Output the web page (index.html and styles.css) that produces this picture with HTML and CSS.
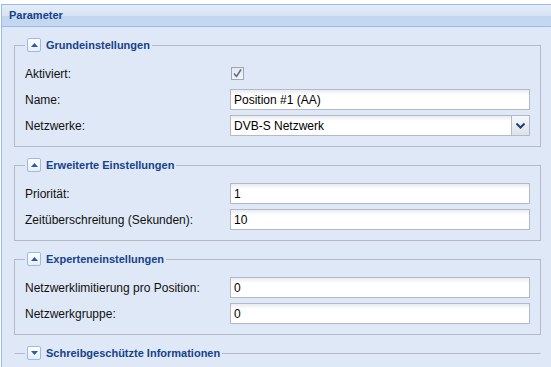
FILE: index.html
```html
<!DOCTYPE html>
<html>
<head>
<title>Parameter</title>
<link rel="stylesheet" href="styles.css">
</head>
<body>
    <div class="panel">
        <div class="panel-header">Parameter</div>
        <div class="panel-body">

            <fieldset class="group">
                <legend><span class="toggle"><svg width="7" height="4" viewBox="0 0 7 4"><path d="M0 4 L3.5 0 L7 4 Z" fill="#2b5aa6"/></svg></span>Grundeinstellungen</legend>
                <div class="row">
                    <label>Aktiviert:</label>
                    <span class="checkbox">
                        <svg width="13" height="13" viewBox="0 0 13 13"><path d="M3 6.5 L5.5 9.5 L10 2.5" fill="none" stroke="#5a6f9a" stroke-width="1.6"/></svg>
                    </span>
                </div>
                <div class="row">
                    <label>Name:</label>
                    <input type="text" class="field" value="Position #1 (AA)">
                </div>
                <div class="row">
                    <label>Netzwerke:</label>
                    <div class="combo">
                        <input type="text" class="field" value="DVB-S Netzwerk">
                        <span class="trigger"><svg width="9" height="6" viewBox="0 0 9 6"><path d="M0.5 0.5 L4.5 4.5 L8.5 0.5" fill="none" stroke="#1f3f78" stroke-width="2"/></svg></span>
                    </div>
                </div>
            </fieldset>

            <fieldset class="group">
                <legend><span class="toggle"><svg width="7" height="4" viewBox="0 0 7 4"><path d="M0 4 L3.5 0 L7 4 Z" fill="#2b5aa6"/></svg></span>Erweiterte Einstellungen</legend>
                <div class="row">
                    <label>Priorität:</label>
                    <input type="text" class="field" value="1">
                </div>
                <div class="row">
                    <label>Zeitüberschreitung (Sekunden):</label>
                    <input type="text" class="field" value="10">
                </div>
            </fieldset>

            <fieldset class="group">
                <legend><span class="toggle"><svg width="7" height="4" viewBox="0 0 7 4"><path d="M0 4 L3.5 0 L7 4 Z" fill="#2b5aa6"/></svg></span>Experteneinstellungen</legend>
                <div class="row">
                    <label>Netzwerklimitierung pro Position:</label>
                    <input type="text" class="field" value="0">
                </div>
                <div class="row">
                    <label>Netzwerkgruppe:</label>
                    <input type="text" class="field" value="0">
                </div>
            </fieldset>

            <fieldset class="group collapsed">
                <legend><span class="toggle"><svg width="7" height="4" viewBox="0 0 7 4"><path d="M0 0 L3.5 4 L7 0 Z" fill="#2b5aa6"/></svg></span>Schreibgeschützte Informationen</legend>
            </fieldset>

        </div>
    </div>
</body>
</html>
```

FILE: styles.css
```css
body {
    margin: 0;
    background-color: #fff;
    font-family: "Liberation Sans", Arial, sans-serif;
    font-size: 12px;
    color: #111;
    overflow: hidden;
}

.panel {
    margin: 4px 0 0 1px;
    width: 553px;
    height: 363px;
    overflow: hidden;
    border-left: 1px solid #99bbe8;
}

.panel-header {
    height: 21px;
    line-height: 21px;
    padding-left: 7px;
    border-top: 1px solid #99bbe8;
    border-bottom: 1px solid #99bbe8;
    background: linear-gradient(to bottom, #e4edf8 0, #d7e3f3 50%, #c2d6ef 54%, #c5d8f0 100%);
    color: #15428b;
    font-weight: bold;
    font-size: 11px;
}

.panel-body {
    background-color: #dfe8f6;
    padding: 10px 12px 20px 12px;
    height: 400px;
}

.group {
    border: 1px solid #b5b8c8;
    margin: 0 0 10px 0;
    padding: 10px 10px 10px 10px;
    width: 505px;
}

.group legend {
    display: flex;
    align-items: center;
    height: 16px;
    padding: 0 2px;
    margin-left: 0;
    color: #15428b;
    font-weight: bold;
    font-size: 11px;
}

.toggle {
    display: inline-flex;
    align-items: center;
    justify-content: center;
    width: 12px;
    height: 12px;
    margin-right: 5px;
    border: 1px solid #99bbe8;
    border-radius: 2px;
    background: linear-gradient(to bottom, #ffffff, #e8eef8);
}

.collapsed {
    border-left-color: transparent;
    border-right-color: transparent;
    border-bottom: none;
    padding-bottom: 0;
}

.row {
    display: flex;
    align-items: center;
    height: 21px;
    margin-bottom: 5px;
}

.row:last-child {
    margin-bottom: 0;
}

.row label {
    width: 205px;
    flex: none;
}

.checkbox {
    display: inline-block;
    width: 11px;
    height: 11px;
    margin-left: 1px;
    border: 1px solid #a0a7b4;
    background: linear-gradient(to bottom, #e6e8ec, #f4f5f7);
    position: relative;
}

.checkbox svg {
    position: absolute;
    left: -1px;
    top: -1px;
}

.field {
    box-sizing: border-box;
    width: 300px;
    height: 21px;
    margin: 0;
    padding: 1px 3px;
    border: 1px solid #b5b8c8;
    background: linear-gradient(to bottom, #e9ebee 0, #ffffff 5px);
    font-family: "Liberation Sans", Arial, sans-serif;
    font-size: 12px;
    color: #000;
    outline: none;
}

.combo {
    display: flex;
    width: 300px;
    height: 21px;
    box-sizing: border-box;
    border: 1px solid #b5b8c8;
}

.combo .field {
    border: none;
    width: 282px;
    height: 19px;
}

.trigger {
    display: flex;
    align-items: center;
    justify-content: center;
    width: 17px;
    border-left: 1px solid #b5b8c8;
    background: linear-gradient(to bottom, #f6f8fb, #dde3ea);
}
```
